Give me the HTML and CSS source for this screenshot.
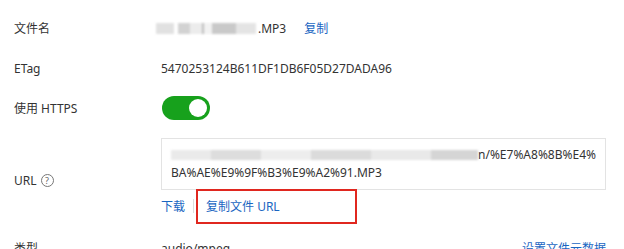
FILE: index.html
```html
<!DOCTYPE html>
<html lang="zh-CN">
<head>
<meta charset="utf-8">
<title>文件详情</title>
<link rel="stylesheet" href="styles.css">
</head>
<body>
<div class="detail">
  <div class="row">
    <div class="label">文件名</div>
    <div class="value">
      <span class="blur blur-name"></span><span class="name-tail">.MP3</span>
      <a class="link copy">复制</a>
    </div>
  </div>
  <div class="row">
    <div class="label">ETag</div>
    <div class="value">5470253124B611DF1DB6F05D27DADA96</div>
  </div>
  <div class="row">
    <div class="label">使用 HTTPS</div>
    <div class="value">
      <span class="switch"><span class="knob"></span></span>
    </div>
  </div>
  <div class="row url-row">
    <div class="label">URL <span class="help">?</span></div>
    <div class="value url-col">
      <div class="url-box">
        <span class="line"><span class="blur blur-url"></span>n/%E7%A8%8B%E4%</span>
        <span class="line">BA%AE%E9%9F%B3%E9%A2%91.MP3</span>
      </div>
      <div class="actions">
        <a class="link">下载</a>
        <span class="divider"></span>
        <a class="link marked">复制文件 URL</a>
      </div>
    </div>
  </div>
  <div class="row last-row">
    <div class="label">类型</div>
    <div class="value grow">audio/mpeg</div>
    <a class="link">设置文件元数据</a>
  </div>
</div>
</body>
</html>
```
FILE: styles.css
```css
* { box-sizing: border-box; }
html, body { margin: 0; background: #fff; }
body {
  font-family: "Noto Sans", "Noto Sans CJK SC", sans-serif;
  font-size: 12px;
  color: #333;
  overflow: hidden;
  height: 249px;
}
.detail {
  padding: 8px 18px 0 14px;
}
.row {
  display: flex;
  align-items: center;
  min-height: 40px;
}
.label {
  width: 147px;
  flex: none;
  display: flex;
  align-items: center;
  gap: 4px;
}
.value {
  display: flex;
  align-items: center;
  flex: 1;
  min-width: 0;
}
.link {
  color: #1a66c2;
  cursor: pointer;
}
.copy { margin-left: 18px; }
.blur {
  display: inline-block;
  height: 11px;
  filter: blur(1.3px);
  opacity: 0.75;
}
.blur-name {
  width: 100px;
  margin-left: -5px;
  background: linear-gradient(90deg,
    #d8d8d8 0 18px, #fff 18px 22px, #c4c4c4 22px 34px, #e6e6e6 34px 46px,
    #aaa 46px 48px, #eee 48px 56px, #b8b8b8 56px 80px, #dcdcdc 80px 100px);
}
.name-tail { margin-left: 2px; }
.switch {
  position: relative;
  display: inline-block;
  width: 48px;
  height: 24px;
  border-radius: 12px;
  background: #17a11c;
  margin-left: 1px;
}
.knob {
  position: absolute;
  right: 3px;
  top: 3px;
  width: 18px;
  height: 18px;
  border-radius: 50%;
  background: #fff;
}
.url-row {
  margin-top: 10px;
}
.help {
  display: inline-flex;
  align-items: center;
  justify-content: center;
  width: 13px;
  height: 13px;
  border: 1px solid #777;
  border-radius: 50%;
  font-size: 9px;
  line-height: 1;
  color: #666;
}
.url-col {
  flex-direction: column;
  align-items: stretch;
}
.url-box {
  border: 1px solid #e3e3e3;
  padding: 7px 9px;
  line-height: 18px;
  height: 52px;
}
.line { display: block; white-space: nowrap; }
.blur-url {
  width: 307px;
  height: 10px;
  vertical-align: -1px;
  background: linear-gradient(90deg,
    #e4e4e4 0 40px, #d2d2d2 40px 90px, #e8e8e8 90px 140px, #cfcfcf 140px 200px,
    #e2e2e2 200px 260px, #c8c8c8 260px 307px);
}
.actions {
  display: flex;
  align-items: center;
  height: 32px;
}
.divider {
  width: 1px;
  height: 14px;
  background: #ddd;
  margin: 0 12px 0 8px;
}
.marked {
  position: relative;
}
.marked::after {
  content: "";
  position: absolute;
  left: -10px;
  top: -8px;
  width: 157px;
  height: 31px;
  border: 2px solid #e0271f;
}
.last-row {
  margin-top: 6px;
}
.grow { flex: 1; }
```
